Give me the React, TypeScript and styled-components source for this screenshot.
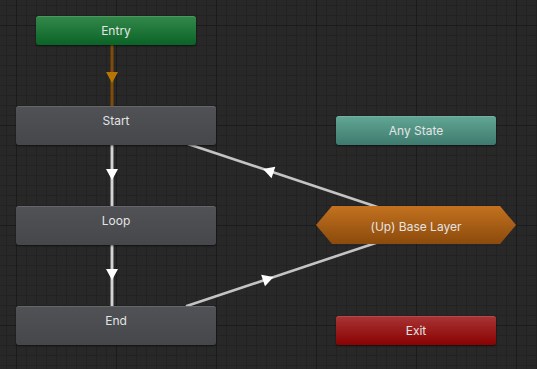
import * as React from "react";
import styled, { createGlobalStyle, css } from "styled-components";

const GlobalStyle = createGlobalStyle`
  html, body {
    margin: 0;
    padding: 0;
    background: #282828;
  }
`;

const Canvas = styled.div`
  position: relative;
  width: 537px;
  height: 369px;
  overflow: hidden;
  background-color: #282828;
  background-image:
    linear-gradient(to right, #1b1b1b 1px, transparent 1px),
    linear-gradient(to bottom, #1b1b1b 1px, transparent 1px),
    linear-gradient(to right, #222222 1px, transparent 1px),
    linear-gradient(to bottom, #222222 1px, transparent 1px);
  background-size: 100px 100px, 100px 100px, 10px 10px, 10px 10px;
  background-position: 16px 25px, 16px 25px, 6px 5px, 6px 5px;
  font-family: Inter, "Noto Sans", sans-serif;
`;

const Edges = styled.svg`
  position: absolute;
  inset: 0;
  width: 537px;
  height: 369px;
`;

type Tone = "entry" | "state" | "any" | "layer" | "exit";

const tones: Record<Tone, string> = {
  entry: "linear-gradient(#33894a, #0a6327)",
  state: "linear-gradient(#505256, #45474a)",
  any: "linear-gradient(#62a795, #3e7a6e)",
  layer: "linear-gradient(#c3721f, #8b4a0c)",
  exit: "linear-gradient(#a93434, #8a0202)",
};

const Node = styled.div<{ $tone: Tone; $x: number; $y: number; $w: number; $h: number }>`
  position: absolute;
  left: ${(p) => p.$x}px;
  top: ${(p) => p.$y}px;
  width: ${(p) => p.$w}px;
  height: ${(p) => p.$h}px;
  box-sizing: border-box;
  display: flex;
  justify-content: center;
  padding-top: 1px;
  line-height: 28px;
  font-size: 12px;
  color: #e4e4e4;
  background: ${(p) => tones[p.$tone]};
  border-radius: 3px;
  box-shadow: inset 0 1px 0 rgba(255, 255, 255, 0.12), 0 1px 2px rgba(0, 0, 0, 0.5);
  ${(p) =>
    p.$tone === "layer" &&
    css`
      align-items: center;
      padding-top: 2px;
      line-height: normal;
      border-radius: 0;
      box-shadow: none;
      clip-path: polygon(16px 0, calc(100% - 16px) 0, 100% 50%, calc(100% - 16px) 100%, 16px 100%, 0 50%);
    `}
`;

// line through centres offset sideways, arrow at its middle
function Arrow(props: { tip: [number, number]; dir: [number, number]; fill: string }) {
  const [tx, ty] = props.tip;
  const [dx, dy] = props.dir;
  const len = Math.hypot(dx, dy);
  const ux = dx / len;
  const uy = dy / len;
  const bx = tx - ux * 11;
  const by = ty - uy * 11;
  const px = -uy * 6;
  const py = ux * 6;
  const pts = `${tx},${ty} ${bx + px},${by + py} ${bx - px},${by - py}`;
  return <polygon points={pts} fill={props.fill} />;
}

export default function App() {
  return (
    <>
      <GlobalStyle />
      <Canvas>
        <Edges viewBox="0 0 537 369">
          <line x1={112} y1={44} x2={112} y2={106} stroke="#7d4d08" strokeWidth={3} />
          <Arrow tip={[112, 83]} dir={[0, 1]} fill="#b97406" />

          <line x1={112} y1={144} x2={112} y2={206} stroke="#c4c4c4" strokeWidth={3} />
          <line x1={112} y1={144} x2={112} y2={206} stroke="#e2e2e2" strokeWidth={1} />
          <Arrow tip={[112, 180]} dir={[0, 1]} fill="#ffffff" />

          <line x1={112} y1={244} x2={112} y2={306} stroke="#c4c4c4" strokeWidth={3} />
          <line x1={112} y1={244} x2={112} y2={306} stroke="#e2e2e2" strokeWidth={1} />
          <Arrow tip={[112, 280]} dir={[0, 1]} fill="#ffffff" />

          <line x1={188} y1={144} x2={378} y2={207.3} stroke="#c4c4c4" strokeWidth={2.6} />
          <Arrow tip={[263, 169]} dir={[-3, -1]} fill="#ffffff" />

          <line x1={186} y1={306.2} x2={378} y2={242.2} stroke="#c4c4c4" strokeWidth={2.6} />
          <Arrow tip={[273.5, 277]} dir={[3, -1]} fill="#ffffff" />
        </Edges>

        <Node $tone="entry" $x={36} $y={16} $w={160} $h={29}>Entry</Node>
        <Node $tone="state" $x={16} $y={106} $w={200} $h={39}>Start</Node>
        <Node $tone="state" $x={16} $y={206} $w={200} $h={39}>Loop</Node>
        <Node $tone="state" $x={16} $y={306} $w={200} $h={39}>End</Node>
        <Node $tone="any" $x={336} $y={116} $w={160} $h={29}>Any State</Node>
        <Node $tone="layer" $x={316} $y={206} $w={200} $h={38}>(Up) Base Layer</Node>
        <Node $tone="exit" $x={336} $y={316} $w={160} $h={29}>Exit</Node>
      </Canvas>
    </>
  );
}
